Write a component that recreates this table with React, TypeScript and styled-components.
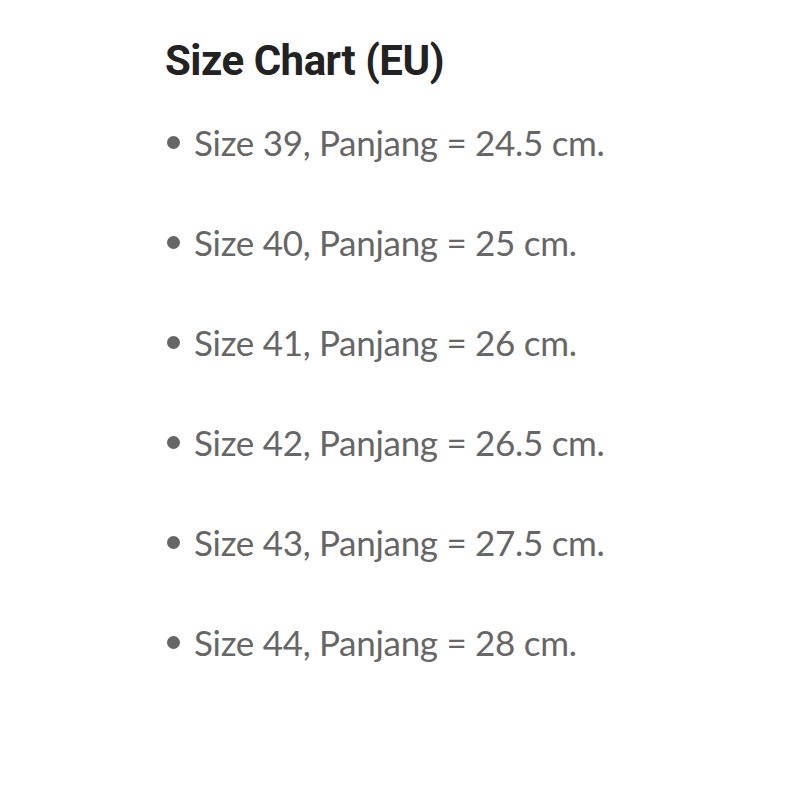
import React from "react";
import styled, { createGlobalStyle } from "styled-components";

const Global = createGlobalStyle`
  html, body { margin: 0; padding: 0; background: #fff; }
`;

const Page = styled.div`
  width: 788px;
  height: 788px;
  box-sizing: border-box;
  padding: 36px 0 0 165px;
  background: #fff;
`;

const Title = styled.h1`
  margin: 0;
  font-family: Roboto, "Liberation Sans", sans-serif;
  font-weight: 700;
  font-size: 42px;
  letter-spacing: -0.5px;
  line-height: 50px;
  color: #222;
`;

const List = styled.ul`
  list-style: none;
  margin: 36px 0 0;
  padding: 0;
  display: flex;
  flex-direction: column;
  gap: 60px;
`;

const Item = styled.li`
  display: flex;
  align-items: center;
  gap: 14px;
  height: 40px;
  font-family: Lato, "Liberation Sans", sans-serif;
  font-weight: 400;
  font-size: 35px;
  letter-spacing: -0.3px;
  line-height: 40px;
  color: #666;
`;

const Dot = styled.span`
  width: 13px;
  height: 13px;
  margin-left: 2px;
  border-radius: 50%;
  background: #666;
  flex: none;
`;

const rows = [
  "Size 39, Panjang = 24.5 cm.",
  "Size 40, Panjang = 25 cm.",
  "Size 41, Panjang = 26 cm.",
  "Size 42, Panjang = 26.5 cm.",
  "Size 43, Panjang = 27.5 cm.",
  "Size 44, Panjang = 28 cm.",
];

export default function App() {
  return (
    <>
      <Global />
      <Page>
        <Title>Size Chart (EU)</Title>
        <List>
          {rows.map((r) => (
            <Item key={r}>
              <Dot />
              <span>{r}</span>
            </Item>
          ))}
        </List>
      </Page>
    </>
  );
}
